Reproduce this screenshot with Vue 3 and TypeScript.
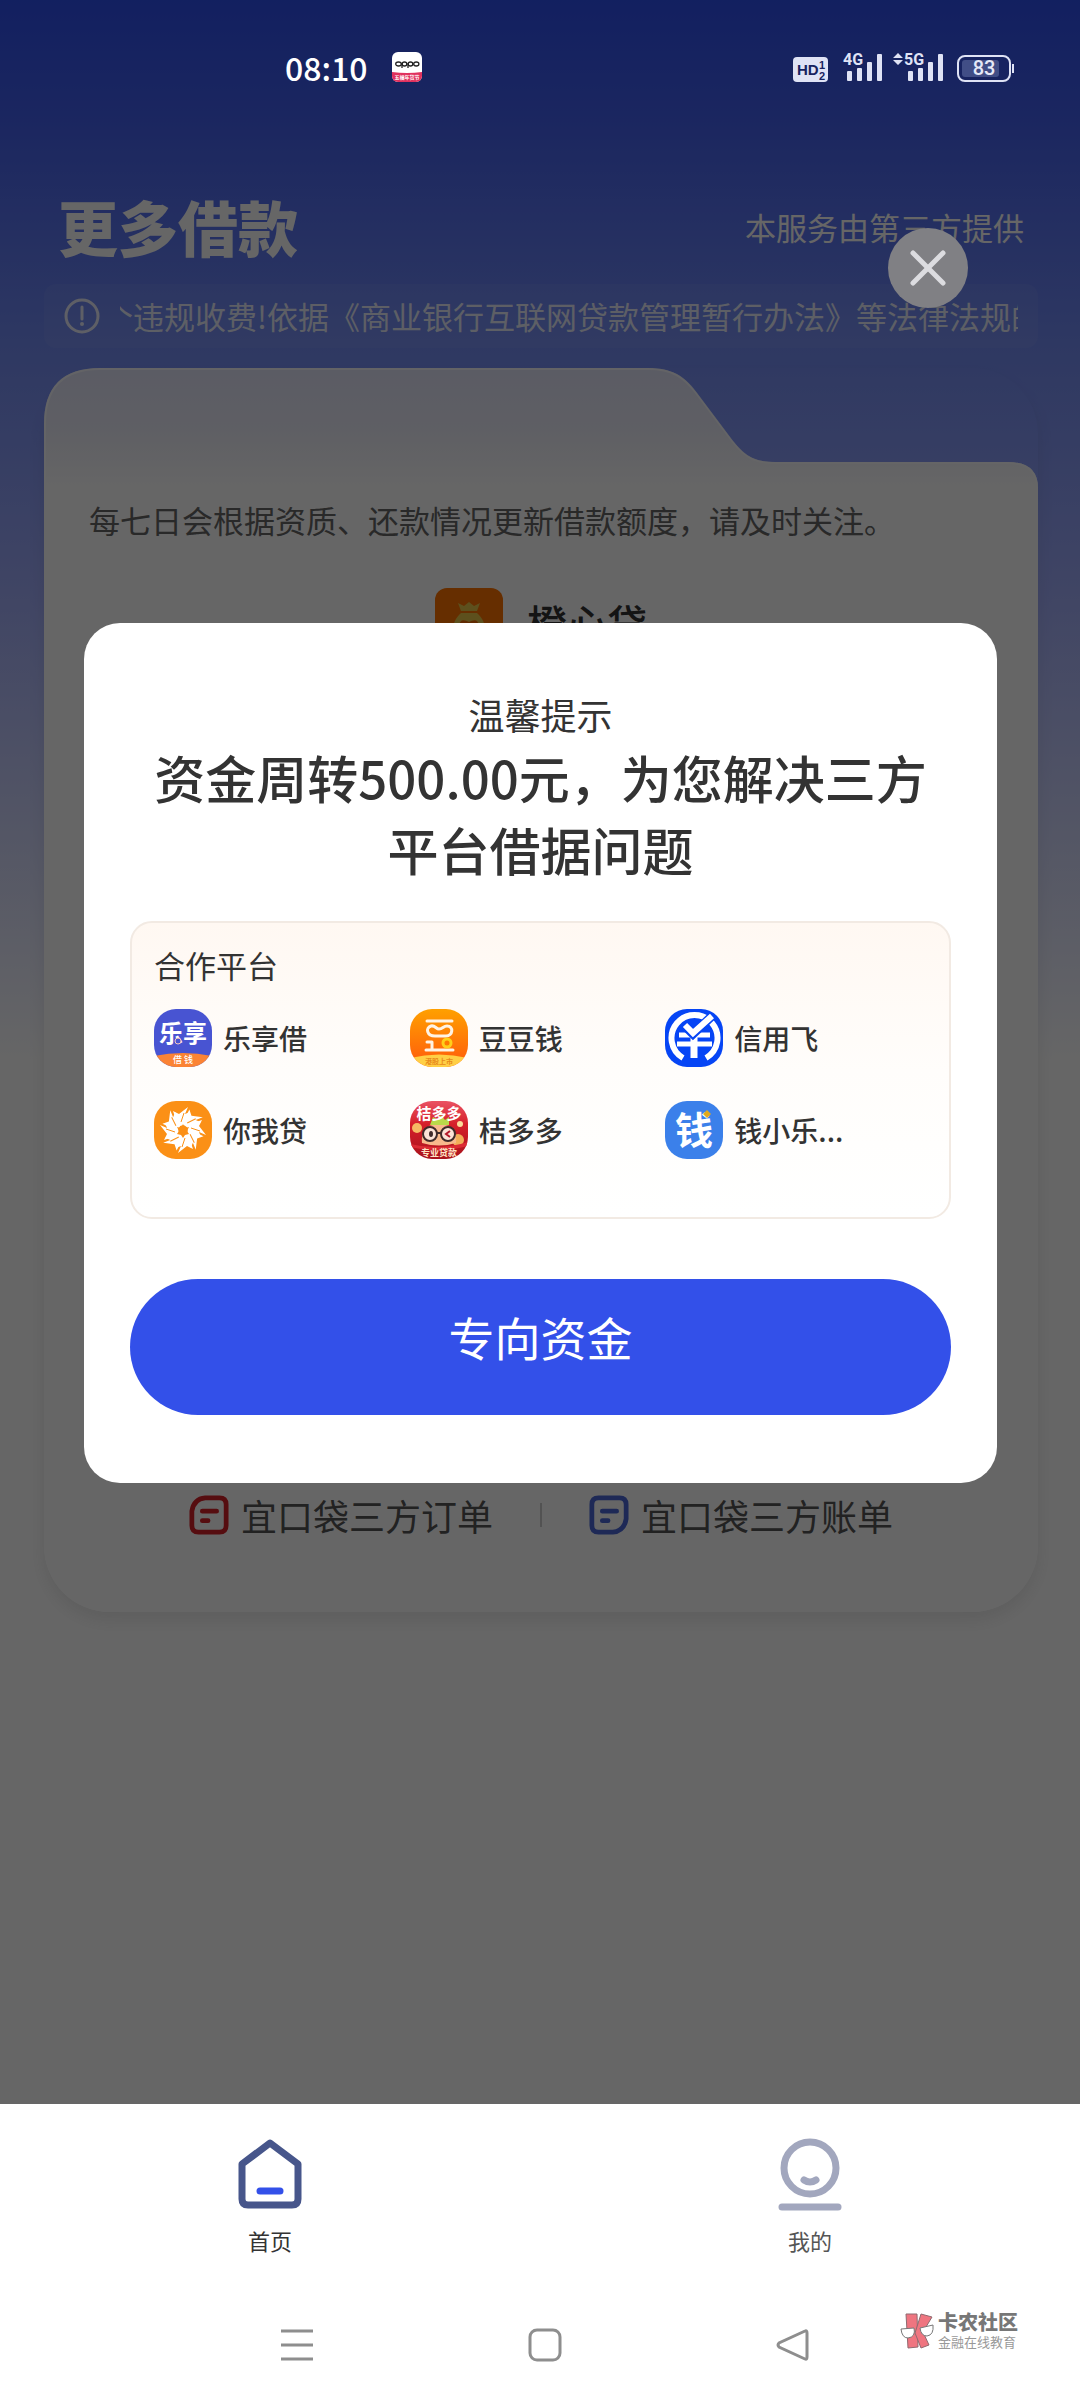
<script setup lang="ts">
interface Platform {
  id: string
  name: string
}

const platforms: Platform[] = [
  { id: 'lexiang', name: '乐享借' },
  { id: 'doudou', name: '豆豆钱' },
  { id: 'xinyong', name: '信用飞' },
  { id: 'niwo', name: '你我贷' },
  { id: 'jieduo', name: '桔多多' },
  { id: 'qianxiaole', name: '钱小乐...' },
]

const petals: number[] = [0, 45, 90, 135, 180, 225, 270, 315]
</script>

<template>
  <div class="page">
    <header class="status">
      <div class="status-left">
        <time class="clock">08:10</time>
        <svg class="app-badge" viewBox="0 0 30 30" aria-hidden="true">
          <defs>
            <clipPath id="badgeClip"><rect width="30" height="30" rx="6" /></clipPath>
          </defs>
          <g clip-path="url(#badgeClip)">
            <rect width="30" height="30" fill="#fff" />
            <path d="M0 20Q15 22 30 20V30H0Z" fill="#e0315e" />
            <g fill="none" stroke="#222" stroke-width="1.3">
              <ellipse cx="6.500" cy="12" rx="2.800" ry="2" />
              <ellipse cx="12.500" cy="12" rx="2.300" ry="2" />
              <ellipse cx="18.500" cy="12" rx="2.300" ry="2" />
              <ellipse cx="24.300" cy="12" rx="2.600" ry="2" />
              <path d="M10 11v5M16 11v5" />
            </g>
            <text x="15" y="27" font-size="5" fill="#fff" text-anchor="middle" font-weight="700">五福年货节</text>
          </g>
        </svg>
      </div>
      <svg class="signals" viewBox="0 0 224 32" aria-label="HD 4G 5G 83%">
        <rect x="0" y="6" width="35" height="25" rx="4" fill="#dfe3f5" />
        <g fill="#17235f" font-weight="700" font-family="Liberation Sans, sans-serif">
          <text x="4" y="24" font-size="15">HD</text>
          <text x="26" y="18" font-size="11">1</text>
          <text x="26" y="29" font-size="11">2</text>
        </g>
        <g fill="#dfe3f5">
          <rect x="54" y="20" width="5" height="10" rx="1" />
          <rect x="64" y="17" width="5" height="13" rx="1" />
          <rect x="74" y="11" width="5" height="19" rx="1" />
          <rect x="84" y="3" width="5" height="27" rx="1" />
          <rect x="115" y="20" width="5" height="10" rx="1" />
          <rect x="125" y="17" width="5" height="13" rx="1" />
          <rect x="135" y="11" width="5" height="19" rx="1" />
          <rect x="145" y="3" width="5" height="27" rx="1" />
          <path d="M105 2l5 5h-10zM105 14l5-5h-10z" />
        </g>
        <g fill="#dfe3f5" font-size="16" font-weight="700" font-family="Roboto, sans-serif">
          <text x="50" y="14" stroke="#152161" stroke-width="3" paint-order="stroke">4G</text>
          <text x="111" y="14" stroke="#152161" stroke-width="3" paint-order="stroke">5G</text>
        </g>
        <rect x="165" y="5" width="52" height="25" rx="7" fill="none" stroke="#dfe3f5" stroke-width="2" />
        <rect x="169" y="9" width="37" height="17" rx="3" fill="#414e86" />
        <rect x="219" y="13" width="2" height="9" fill="#dfe3f5" />
        <text x="191" y="24" font-size="20" font-weight="500" fill="#e6e9f7" text-anchor="middle" font-family="Roboto, sans-serif">83</text>
      </svg>
    </header>

    <main class="home">
      <div class="heading">
        <h1>更多借款</h1>
        <span class="provider">本服务由第三方提供</span>
      </div>

      <div class="notice">
        <svg class="notice-icon" viewBox="0 0 36 36" aria-hidden="true">
          <circle cx="18" cy="18" r="16" fill="none" stroke="currentColor" stroke-width="3" />
          <path d="M18 9v12" stroke="currentColor" stroke-width="3" stroke-linecap="round" />
          <circle cx="18" cy="26" r="2" fill="currentColor" />
        </svg>
        <div class="ticker"><p>个违规收费!依据《商业银行互联网贷款管理暂行办法》等法律法规的</p></div>
      </div>

      <section class="card">
        <svg class="card-top" viewBox="0 0 994 120" aria-hidden="true">
          <defs>
            <linearGradient id="cardFill" x1="0" y1="0" x2="0" y2="1">
              <stop offset="0" stop-color="#e3e5fa" />
              <stop offset=".5" stop-color="#ecedf9" />
              <stop offset="1" stop-color="#ffffff" />
            </linearGradient>
          </defs>
          <path
            d="M0 120V56Q0 0 56 0H604C628 0 640 8 652 24L688 72C702 90 712 94 732 94H964Q994 94 994 120Z"
            fill="url(#cardFill)"
          />
          <path
            d="M1 120V56Q1 1 56 1H604C628 1 640 9 652 25L688 73C702 91 712 95 732 95H964Q993 95 993 120"
            fill="none"
            stroke="#fff"
            stroke-opacity=".7"
            stroke-width="2"
          />
        </svg>
        <div class="card-body">
          <p class="tip">每七日会根据资质、还款情况更新借款额度，请及时关注。</p>
          <div class="product">
            <svg class="product-logo" viewBox="0 0 68 68" aria-hidden="true">
              <rect width="68" height="68" rx="12" fill="#ff7400" />
              <path d="M23 15l6 3 5-4 5 4 6-3-3 8H26z" fill="#e8c84a" />
              <path d="M26 25H42C52 33 56 56 42 58H26C12 56 16 33 26 25Z" fill="#e8c84a" />
              <path d="M34 48L24 38Q25 29 34 34Q43 29 44 38Z" fill="#f06a00" />
            </svg>
            <h2>橙心贷</h2>
          </div>
          <nav class="orders">
            <a href="#orders">
              <svg viewBox="0 0 42 42" fill="none" stroke="#d8222a" stroke-width="5" aria-hidden="true">
                <path d="M17 3H32Q39 3 39 10V32Q39 39 32 39H10Q3 39 3 32V17Q5 4 17 3Z" />
                <path d="M14 17H29M14 27H20" stroke-linecap="round" />
              </svg>
              宜口袋三方订单
            </a>
            <i class="rule"></i>
            <a href="#bills">
              <svg viewBox="0 0 42 42" fill="none" stroke="#4b68d8" stroke-width="5" aria-hidden="true">
                <path d="M10 3H32Q39 3 39 10V25Q37 38 25 39H10Q3 39 3 32V10Q3 3 10 3Z" />
                <path d="M14 17H29M14 27H20" stroke-linecap="round" />
              </svg>
              宜口袋三方账单
            </a>
          </nav>
        </div>
      </section>
    </main>

    <div class="overlay">
      <button class="close" type="button" aria-label="关闭">
        <svg viewBox="0 0 80 80" aria-hidden="true">
          <path d="M25 25L55 55M55 25L25 55" stroke="#dcdce0" stroke-width="5" stroke-linecap="round" />
        </svg>
      </button>

      <section class="dialog" role="dialog" aria-labelledby="dialogTitle">
        <p class="dialog-hint">温馨提示</p>
        <h2 id="dialogTitle">资金周转500.00元，为您解决三方平台借据问题</h2>

        <div class="partners">
          <h3>合作平台</h3>
          <ul>
            <li v-for="item in platforms" :key="item.id">
              <svg class="logo" viewBox="0 0 58 58" aria-hidden="true">
                <template v-if="item.id === 'lexiang'">
                  <rect width="58" height="58" fill="#4854d2" />
                  <path d="M0 47Q29 41 58 47V58H0Z" fill="#fb8334" />
                  <text x="29" y="33" font-size="24" font-weight="700" fill="#fff" text-anchor="middle">乐享</text>
                  <circle cx="24" cy="32" r="3" fill="#4854d2" stroke="#f6c9c0" stroke-width="1" />
                  <text x="29" y="54" font-size="9" font-weight="500" fill="#fff" text-anchor="middle">借 钱</text>
                </template>
                <template v-else-if="item.id === 'doudou'">
                  <defs>
                    <linearGradient id="doudouFill" x1="0" y1="0" x2="0" y2="1">
                      <stop offset="0" stop-color="#ffa000" />
                      <stop offset="1" stop-color="#ff5a0c" />
                    </linearGradient>
                  </defs>
                  <rect width="58" height="58" fill="url(#doudouFill)" />
                  <path d="M0 49Q29 42 58 49V58H0Z" fill="#ffcf45" />
                  <g fill="none" stroke="#fff3e4" stroke-width="3" stroke-linecap="round">
                    <path d="M17 12H42" />
                    <path d="M21 17C15 19 17 27 25 27H36C43 27 44 17 37 17C33 17 33 20 29 20C26 20 25 16 21 17Z" />
                    <path d="M16 41H43M22 33V40M17 33H22" />
                  </g>
                  <circle cx="37" cy="34" r="4" fill="#ff7a00" stroke="#ffcf1a" stroke-width="3" />
                  <text x="29" y="55" font-size="7" font-weight="700" fill="#e88a1a" text-anchor="middle">港股上市</text>
                </template>
                <template v-else-if="item.id === 'xinyong'">
                  <rect width="58" height="58" fill="#0645f5" />
                  <path d="M18 49A23 23 0 1 1 41 49" fill="none" stroke="#fff" stroke-width="6" />
                  <path d="M14 26H45M12 35H47" stroke="#fff" stroke-width="5" />
                  <path d="M29 24V49" stroke="#fff" stroke-width="7" />
                  <path d="M20 17L28 25L47 7" fill="none" stroke="#0645f5" stroke-width="9" />
                  <path d="M20 16L28 24L47 7" fill="none" stroke="#fff" stroke-width="6" />
                </template>
                <template v-else-if="item.id === 'niwo'">
                  <rect width="58" height="58" fill="#fb9016" />
                  <g v-for="angle in petals" :key="angle" :transform="`rotate(${angle} 29 29)`">
                    <path d="M24 25L19 10L25 13L34 6L31 13L36 11L32 24Z" fill="#fff" />
                    <path d="M27 21L30 12" stroke="#fb9016" stroke-width="1" />
                  </g>
                  <path d="M29 23l2 4 4-1-2 4 2 3-4 1-2 3-2-3-4-1 2-3-2-4 4 1z" fill="#fb9016" />
                </template>
                <template v-else-if="item.id === 'jieduo'">
                  <defs>
                    <linearGradient id="jieduoFill" x1="0" y1="0" x2="0" y2="1">
                      <stop offset="0" stop-color="#ea5263" />
                      <stop offset=".4" stop-color="#d5202a" />
                      <stop offset="1" stop-color="#a9121c" />
                    </linearGradient>
                  </defs>
                  <rect width="58" height="58" fill="url(#jieduoFill)" />
                  <circle cx="7" cy="27" r="5" fill="#f6bb64" />
                  <circle cx="48" cy="39" r="6" fill="#f2ae58" />
                  <circle cx="50" cy="23" r="3" fill="#fbdc9a" />
                  <path d="M12 42Q10 24 29 23Q48 24 46 42Q29 47 12 42Z" fill="#f8b98c" />
                  <path d="M20 24L23 16L28 19L31 14L35 19L39 16V24Z" fill="#b9d94a" />
                  <text x="29" y="18" font-size="15" font-weight="700" fill="#fff" text-anchor="middle">桔多多</text>
                  <g fill="#fbe3d7" stroke="#3f2b2a" stroke-width="2">
                    <circle cx="20" cy="33" r="7" />
                    <circle cx="38" cy="33" r="7" />
                    <path d="M27 32H31" />
                  </g>
                  <ellipse cx="21" cy="33" rx="2" ry="3" fill="#3f2b2a" />
                  <path d="M40 30L36 33L40 36" fill="none" stroke="#b3182a" stroke-width="2" />
                  <path d="M0 43Q29 50 58 41V45Q29 53 0 46Z" fill="#dc2b34" />
                  <text x="29" y="55" font-size="9" font-weight="700" fill="#ffe3c4" text-anchor="middle">专业贷款</text>
                </template>
                <template v-else>
                  <rect width="58" height="58" fill="#3b80ea" />
                  <text x="29" y="43" font-size="38" font-weight="700" fill="#fff" text-anchor="middle">钱</text>
                  <path d="M42 9l4 4-4 4-4-4z" fill="#e3a91c" />
                </template>
              </svg>
              <span>{{ item.name }}</span>
            </li>
          </ul>
        </div>

        <button class="primary" type="button">专向资金</button>
      </section>
    </div>

    <footer class="bottom">
      <nav class="tabs">
        <a class="active" href="#home">
          <svg viewBox="0 0 72 80" fill="none" aria-hidden="true">
            <path d="M36 9L64 30V65Q64 71 58 71H14Q8 71 8 65V30Z" stroke="#47568b" stroke-width="7" stroke-linejoin="round" />
            <path d="M26 57H46" stroke="#3350e9" stroke-width="7" stroke-linecap="round" />
          </svg>
          首页
        </a>
        <a href="#mine">
          <svg viewBox="0 0 72 80" fill="none" stroke="#a2a7be" stroke-linecap="round" aria-hidden="true">
            <circle cx="36" cy="34" r="26" stroke-width="7" />
            <path d="M30 46Q36 50 42 46" stroke-width="7" />
            <path d="M8 73H64" stroke-width="7" />
          </svg>
          我的
        </a>
      </nav>
      <div class="system">
        <div class="keys">
          <button type="button" aria-label="最近任务">
            <svg viewBox="0 0 36 36"><path d="M2 4H34M2 18H34M2 32H34" /></svg>
          </button>
          <button type="button" aria-label="主屏幕">
            <svg viewBox="0 0 36 36"><rect x="3" y="3" width="30" height="30" rx="7" /></svg>
          </button>
          <button type="button" aria-label="返回">
            <svg viewBox="0 0 36 36"><path d="M30 4Q32 3 32 6V30Q32 33 30 32L4 20Q2 18 4 16Z" /></svg>
          </button>
        </div>
        <div class="mark">
          <svg viewBox="0 0 36 36" aria-hidden="true">
            <g fill="#ef7580" stroke="#8f6a70" stroke-width="1">
              <path d="M6 1H17L18 34L8 35Z" />
              <path d="M21 1L32 4L23 19L29 32L21 35L15 20Z" />
            </g>
            <g fill="#fff" stroke="#777" stroke-width="1">
              <path d="M1 16L14 15Q16 24 8 25Q2 25 1 16Z" />
              <path d="M20 15L33 12Q34 22 27 23Q21 23 20 15Z" />
            </g>
          </svg>
          <p><strong>卡农社区</strong><small>金融在线教育</small></p>
        </div>
      </div>
    </footer>
  </div>
</template>

<style>
body {
  margin: 0;
}
</style>

<style scoped>
.page {
  position: relative;
  display: flex;
  flex-direction: column;
  min-height: 100vh;
  font-family: 'Noto Sans CJK SC', sans-serif;
  color: #333;
  background: linear-gradient(#2f50f0 0, #4460f0 120px, #738cf5 340px, #a2aefb 600px, #fff 1060px);
}
h1, h2, h3, p, ul {
  margin: 0;
  padding: 0;
}
button {
  padding: 0;
  border: 0;
  font: inherit;
  cursor: pointer;
}
a {
  color: inherit;
  text-decoration: none;
}
svg {
  display: block;
}

.status {
  position: relative;
  z-index: 2;
  display: flex;
  align-items: center;
  justify-content: space-between;
  height: 134px;
  padding: 0 63px 0 285px;
}
.status-left {
  display: flex;
  align-items: center;
  gap: 24px;
}
.clock {
  font-size: 32px;
  line-height: 48px;
  font-weight: 500;
  color: #fff;
}
.app-badge {
  width: 30px;
  height: 30px;
}
.signals {
  width: 224px;
  height: 32px;
}

.home {
  flex: 1;
  padding: 46px 42px 0 44px;
}
.heading {
  display: flex;
  align-items: center;
  justify-content: space-between;
  height: 92px;
  padding: 0 14px;
  color: #fff;
}
h1 {
  font-size: 60px;
  line-height: 92px;
  font-weight: 900;
}
.provider {
  font-size: 31px;
}
.notice {
  display: flex;
  align-items: center;
  height: 64px;
  margin-top: 12px;
  padding: 0 20px;
  gap: 20px;
  border-radius: 12px;
  color: rgba(255, 255, 255, 0.85);
  background: rgba(255, 255, 255, 0.05);
}
.notice-icon {
  flex: none;
  width: 36px;
  height: 36px;
}
.ticker {
  flex: 1;
  display: flex;
  overflow: hidden;
}
.ticker p {
  flex: none;
  margin-left: -18px;
  font-size: 31px;
  line-height: 48px;
  white-space: nowrap;
}

.card {
  margin-top: 20px;
  border-radius: 66px;
  box-shadow: 0 8px 16px rgba(60, 60, 60, 0.1);
}
.card-top {
  width: 100%;
}
.card-body {
  padding: 8px 45px 70px;
  border-radius: 0 0 66px 66px;
  background: #fff;
}
.tip {
  font-size: 31px;
  line-height: 48px;
  color: #666;
}
.product {
  display: flex;
  align-items: center;
  justify-content: center;
  gap: 24px;
  margin-top: 44px;
}
.product-logo {
  width: 68px;
  height: 68px;
}
.product h2 {
  font-size: 40px;
  line-height: 60px;
  font-weight: 500;
}
.orders {
  display: flex;
  align-items: center;
  justify-content: center;
  gap: 47px;
  margin-top: 832px;
}
.orders a {
  display: flex;
  align-items: center;
  gap: 12px;
  font-size: 36px;
  line-height: 54px;
  color: #555;
}
.orders svg {
  width: 40px;
  height: 40px;
}
.rule {
  width: 2px;
  height: 24px;
  background: #ccc;
}

.overlay {
  position: absolute;
  inset: 0;
  z-index: 1;
  display: flex;
  flex-direction: column;
  padding: 228px 83px 0 84px;
  background: rgba(0, 0, 0, 0.6);
}
.close {
  align-self: flex-end;
  width: 80px;
  height: 80px;
  margin-right: 29px;
  border-radius: 50%;
  background: #808084;
}
.dialog {
  margin-top: 315px;
  padding: 64px 46px 68px;
  border-radius: 36px;
  background: #fff;
  text-align: center;
}
.dialog-hint {
  font-size: 36px;
  line-height: 54px;
}
.dialog h2 {
  font-size: 51px;
  line-height: 72px;
  font-weight: 500;
}
.partners {
  box-sizing: border-box;
  min-height: 298px;
  margin-top: 36px;
  padding: 18px 28px 52px 22px;
  border: 2px solid #f2eae3;
  border-radius: 22px;
  text-align: left;
  background: linear-gradient(#fff8f2, #fffdfb 50%, #fff);
}
.partners h3 {
  font-size: 31px;
  line-height: 48px;
  font-weight: 400;
}
.partners ul {
  display: grid;
  grid-template-columns: repeat(3, 1fr);
  row-gap: 34px;
  margin-top: 20px;
  list-style: none;
}
.partners li {
  display: flex;
  align-items: center;
  gap: 11px;
  font-size: 28px;
  line-height: 42px;
  font-weight: 500;
}
.logo {
  width: 58px;
  height: 58px;
  border-radius: 22px;
}
.primary {
  width: 100%;
  height: 136px;
  margin-top: 60px;
  padding-bottom: 22px;
  border-radius: 68px;
  font-size: 46px;
  color: #fff;
  background: #3350e9;
}

.bottom {
  position: relative;
  z-index: 2;
  box-sizing: border-box;
  height: 296px;
  background: #fff;
}
.tabs {
  display: flex;
  padding-top: 30px;
}
.tabs a {
  flex: 1;
  display: flex;
  flex-direction: column;
  align-items: center;
  gap: 9px;
  font-size: 22px;
  line-height: 34px;
  color: #555;
}
.tabs .active {
  color: #333;
}
.tabs svg {
  width: 72px;
  height: 80px;
}
.system {
  display: flex;
  align-items: center;
  justify-content: space-between;
  margin-top: 42px;
  padding: 0 62px 0 279px;
}
.keys {
  display: flex;
  gap: 212px;
  padding-top: 28px;
}
.keys button {
  background: none;
}
.keys svg {
  width: 36px;
  height: 36px;
  fill: none;
  stroke: #8e8e8e;
  stroke-width: 3px;
}
.mark {
  display: flex;
  align-items: center;
  gap: 2px;
}
.mark svg {
  width: 36px;
  height: 36px;
}
.mark p {
  display: flex;
  flex-direction: column;
}
.mark strong {
  font-size: 20px;
  line-height: 22px;
  font-weight: 900;
  color: #777;
}
.mark small {
  font-size: 13px;
  line-height: 18px;
  color: #999;
}
</style>
